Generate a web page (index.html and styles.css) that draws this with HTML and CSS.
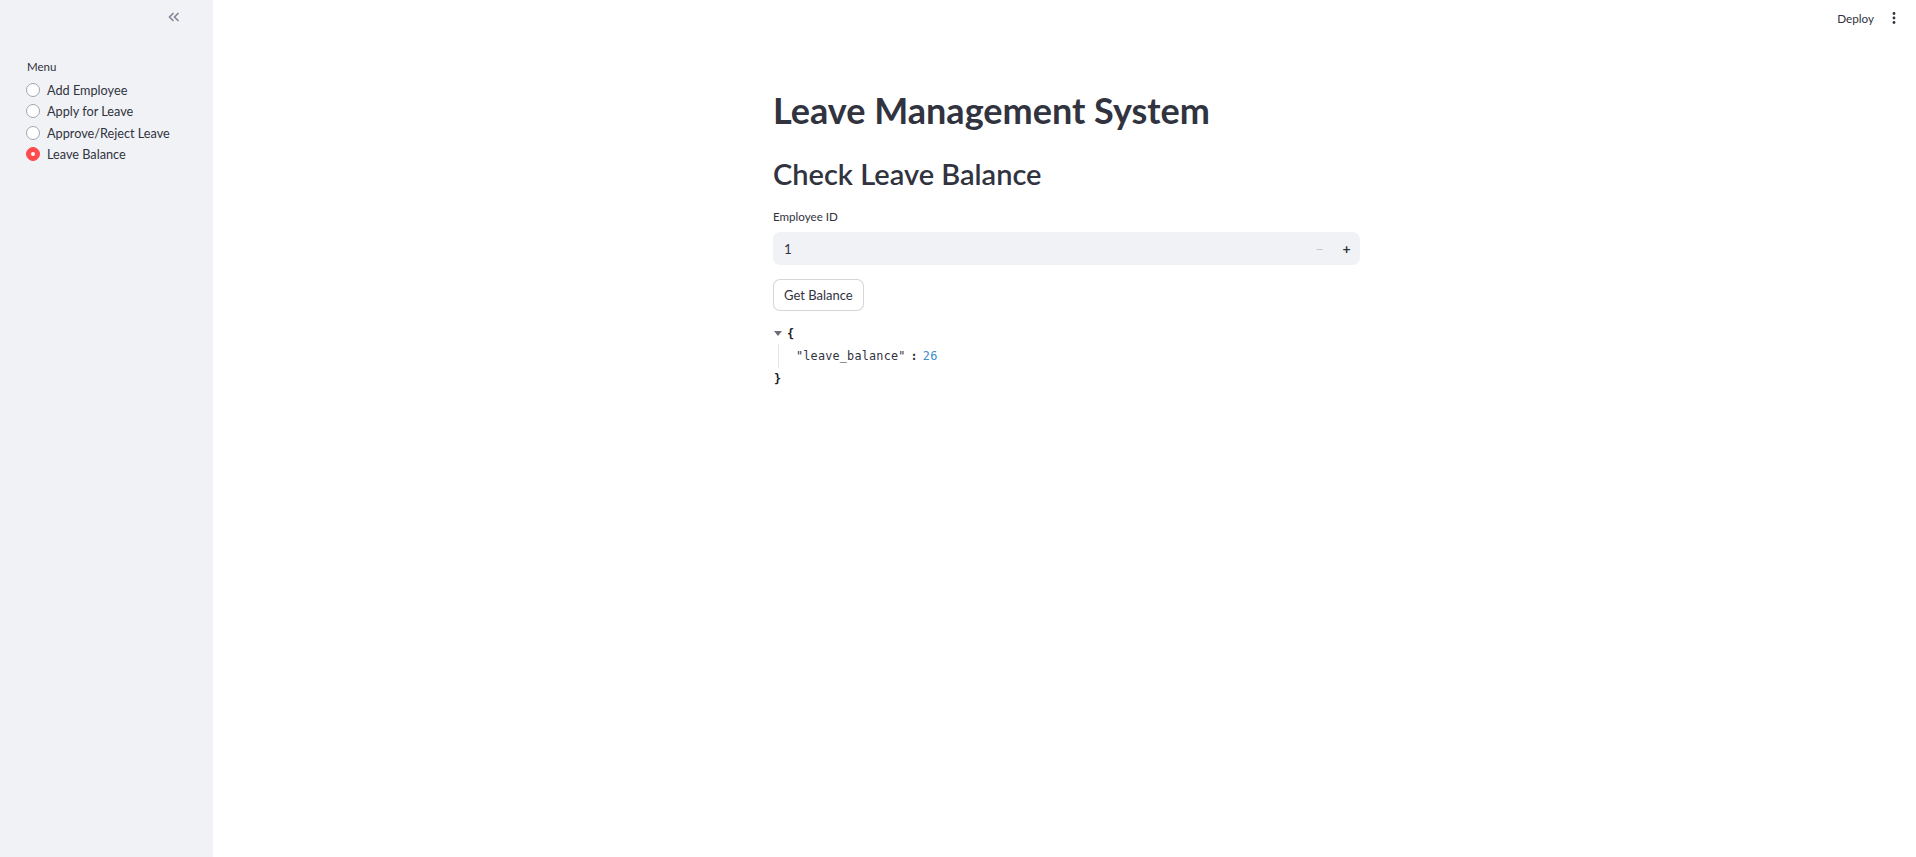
FILE: index.html
```html
<!DOCTYPE html>
<html>
<head>
<meta charset="utf-8">
<link rel="stylesheet" href="styles.css">
</head>
<body>
<div class="app">
  <aside class="sidebar">
    <div class="side-top">
      <svg class="collapse" width="12" height="10" viewBox="0 0 12 10"><path d="M5.5 1 L1.5 5 L5.5 9 M10.5 1 L6.5 5 L10.5 9" fill="none" stroke="#808495" stroke-width="1.6"/></svg>
    </div>
    <div class="menu">
      <div class="menu-label">Menu</div>
      <div class="radio"><span class="dot"></span><span>Add Employee</span></div>
      <div class="radio"><span class="dot"></span><span>Apply for Leave</span></div>
      <div class="radio"><span class="dot"></span><span>Approve/Reject Leave</span></div>
      <div class="radio on"><span class="dot"></span><span>Leave Balance</span></div>
    </div>
  </aside>
  <main class="main">
    <header class="topbar">
      <span class="deploy">Deploy</span>
      <svg class="kebab" width="4" height="12" viewBox="0 0 4 12"><circle cx="2" cy="1.5" r="1.4" fill="#31333F"/><circle cx="2" cy="6" r="1.4" fill="#31333F"/><circle cx="2" cy="10.5" r="1.4" fill="#31333F"/></svg>
    </header>
    <div class="content">
      <h1 class="title">Leave Management System</h1>
      <h2 class="subtitle">Check Leave Balance</h2>
      <label class="label">Employee ID</label>
      <div class="numinput">
        <span class="val">1</span>
        <span class="steps"><span class="minus">−</span><span class="plus">+</span></span>
      </div>
      <button class="btn">Get Balance</button>
      <div class="json">
        <div class="jline"><span class="tri"></span><span class="brace">{</span></div>
        <div class="jbody"><span class="key">"leave_balance"</span><span class="colon">:</span><span class="num">26</span></div>
        <div class="jline close"><span class="brace">}</span></div>
      </div>
    </div>
  </main>
</div>
</body>
</html>
```
FILE: styles.css
```css
* { box-sizing: border-box; }
html, body { margin: 0; padding: 0; height: 100%; }
body { font-family: Lato, "Noto Sans", sans-serif; color: #31333F; background: #fff; }
.app { display: flex; height: 100vh; }
.sidebar { width: 213px; flex: none; background: #f0f2f6; padding: 0 0 0 26px; }
.side-top { height: 60px; display: flex; justify-content: flex-end; padding: 12px 33px 0 0; align-items: flex-start; }
.menu { display: flex; flex-direction: column; }
.menu-label { font-size: 11.5px; height: 14px; line-height: 14px; margin-bottom: 5px; padding-left: 1px; }
.radio { display: flex; align-items: center; height: 21.5px; font-size: 12.7px; gap: 7px; }
.radio:first-of-type { margin-top: 1px; }
.dot { width: 14px; height: 14px; border-radius: 50%; border: 1px solid #a3a6ae; background: #fff; flex: none; position: relative; }
.radio.on .dot { background: #ff4b4b; border-color: #ff4b4b; }
.radio.on .dot::after { content: ""; position: absolute; left: 4px; top: 4px; width: 4px; height: 4px; border-radius: 50%; background: #fff; }
.main { flex: 1; display: flex; flex-direction: column; padding-left: 4px; }
.topbar { height: 36px; display: flex; justify-content: flex-end; align-items: center; padding-right: 20px; gap: 18px; }
.deploy { font-size: 11.7px; color: #31333F; }
.content { width: 587px; margin: 0 auto; padding-top: 52px; display: flex; flex-direction: column; align-items: flex-start; }
.title { font-size: 36px; font-weight: 700; margin: 0; line-height: 44px; }
.subtitle { font-size: 29px; font-weight: 600; margin: 24px 0 0; line-height: 36px; }
.label { font-size: 11.6px; margin-top: 18px; line-height: 14px; }
.numinput { width: 100%; height: 33px; margin-top: 8px; background: #f0f2f6; border-radius: 7px; display: flex; align-items: center; justify-content: space-between; padding-left: 11px; font-size: 13.3px; }
.steps { display: flex; height: 100%; }
.steps span { width: 27px; display: flex; align-items: center; justify-content: center; font-size: 14px; }
.minus { color: #c4c6cc; }
.plus { color: #31333F; font-weight: 700; }
.btn { margin-top: 14px; height: 32px; padding: 0 10px; background: #fff; border: 1px solid rgba(49,51,63,0.2); border-radius: 7px; font-family: inherit; font-size: 13px; color: #31333F; }
.json { margin-top: 12px; font-family: "DejaVu Sans Mono", monospace; font-size: 11.8px; }
.jline { display: flex; align-items: center; height: 21px; }
.tri { width: 0; height: 0; border-left: 4px solid transparent; border-right: 4px solid transparent; border-top: 5px solid #6b6e78; margin: 0 5px 0 1px; }
.brace { font-weight: 700; color: #1a1c24; }
.jbody { margin-left: 5px; border-left: 1px solid #e4e5e8; padding-left: 17px; height: 24px; display: flex; align-items: center; letter-spacing: 0.2px; }
.key { color: #31333F; }
.colon { color: #31333F; font-weight: 700; margin: 0 5px; }
.num { color: #3f8ccc; }
.close { padding-left: 1px; }
```
